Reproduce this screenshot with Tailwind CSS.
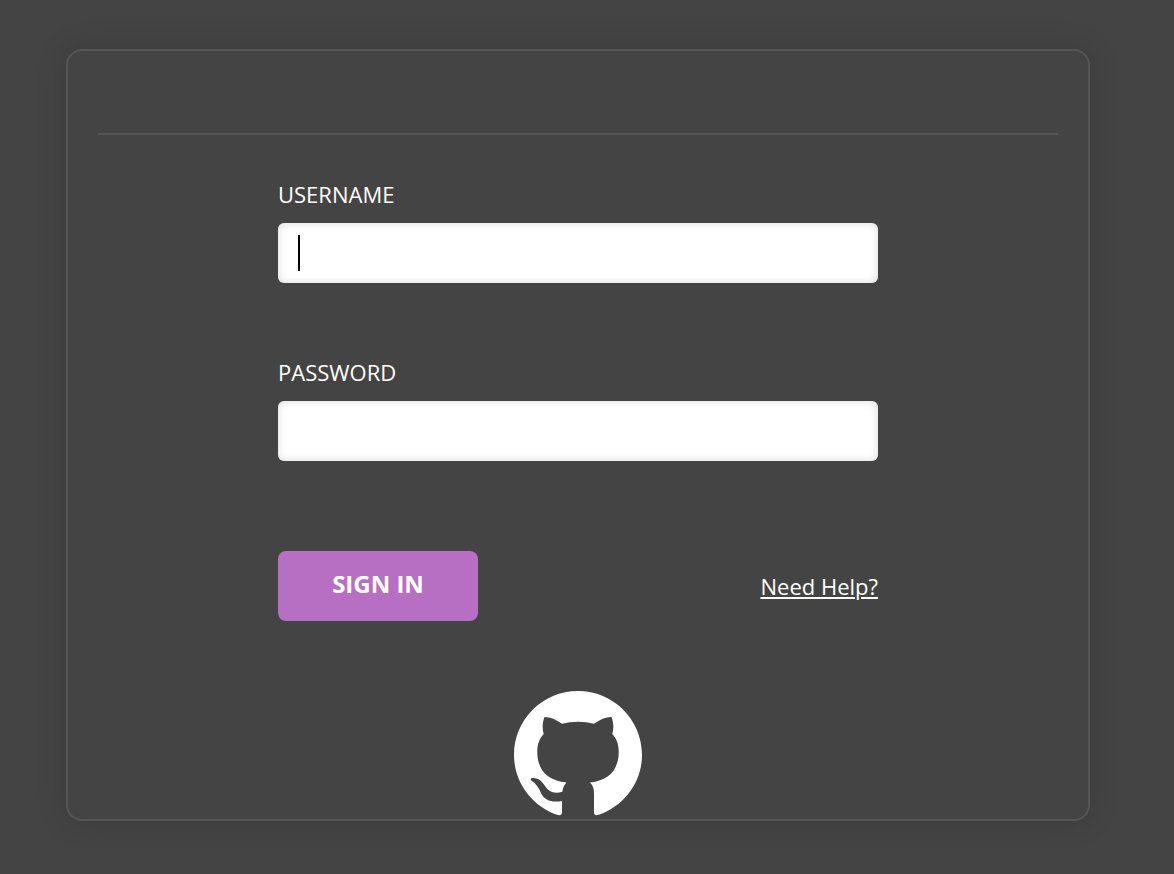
<!DOCTYPE html>
<html lang="en">
<head>
<meta charset="utf-8">
<meta name="viewport" content="width=device-width, initial-scale=1">
<title>Sign In</title>
<script src="https://cdn.jsdelivr.net/npm/@tailwindcss/browser@4"></script>
</head>
<body class="min-h-screen bg-[#444444] pt-[49px] pr-[84px] pb-12 pl-[66px] font-['Open_Sans',sans-serif] text-[22px] leading-[30px] text-white">
<main class="rounded-2xl border-2 border-[#555555] px-[30px] shadow-[0_0_30px_rgba(0,0,0,0.15)]">
  <header class="h-21 border-b-2 border-[#555555]"></header>
  <form class="mx-auto flex max-w-[600px] flex-col pt-11">
    <label for="username">USERNAME</label>
    <div class="relative mt-3.5">
      <input id="username" name="username" type="text" autocomplete="username" class="block h-[60px] w-full rounded-md bg-white px-5 text-black shadow-[inset_0_0_8px_rgba(0,0,0,0.15)] outline-none">
      <span class="pointer-events-none absolute top-3 left-5 h-9 w-0.5 bg-black"></span>
    </div>
    <label for="password" class="mt-[74px]">PASSWORD</label>
    <input id="password" name="password" type="password" autocomplete="current-password" class="mt-3.5 block h-[60px] w-full rounded-md bg-white px-5 text-black shadow-[inset_0_0_8px_rgba(0,0,0,0.15)] outline-none">
    <div class="mt-[90px] flex items-center justify-between">
      <button type="submit" class="h-[70px] w-[200px] rounded-lg bg-[#b76fc3] pb-1 text-2xl font-bold">SIGN IN</button>
      <a href="#help" class="underline decoration-2 underline-offset-2">Need Help?</a>
    </div>
  </form>
  <a href="#github" aria-label="GitHub" class="mx-auto mt-[70px] block h-32 w-32">
    <svg class="block h-32 w-full" viewBox="0 0 128 128" fill="#fff" aria-hidden="true"><path d="M64 0C28.6 0 0 28.6 0 64c0 27.5 18 51 43 59.8 3 .8 5 .2 5-2.3V110c-10 1.7-17.5-.3-21-8-2.200-5.500-5-9.500-9-12-2.500-2-1-3.200 1.500-3.100 5.500.2 8.300 3.100 11.500 8.100 4 6.200 9.500 8 17.300 5.700.7-3.800 1.700-6.700 4.200-9.200C33.500 89.500 23.300 79.500 23.300 60.500c0-7.500 2.200-13 6.400-17.500-1.500-5-1.500-11 .8-17 5.500-.1 11.500 2.600 17.500 6.700 10-2.700 22-2.700 32 0 6-4.100 12-6.800 17.500-6.700 2.300 6 2.300 12 .8 17 4.200 4.500 6.400 10 6.400 17.500 0 19-10.200 29-28.700 31 3 2.500 4 6.500 4 11.500v18.500c0 2.500 1.800 3.100 4.800 2.300C110 115 128 91.500 128 64 128 28.600 99.400 0 64 0z"/></svg>
  </a>
</main>
</body>
</html>
